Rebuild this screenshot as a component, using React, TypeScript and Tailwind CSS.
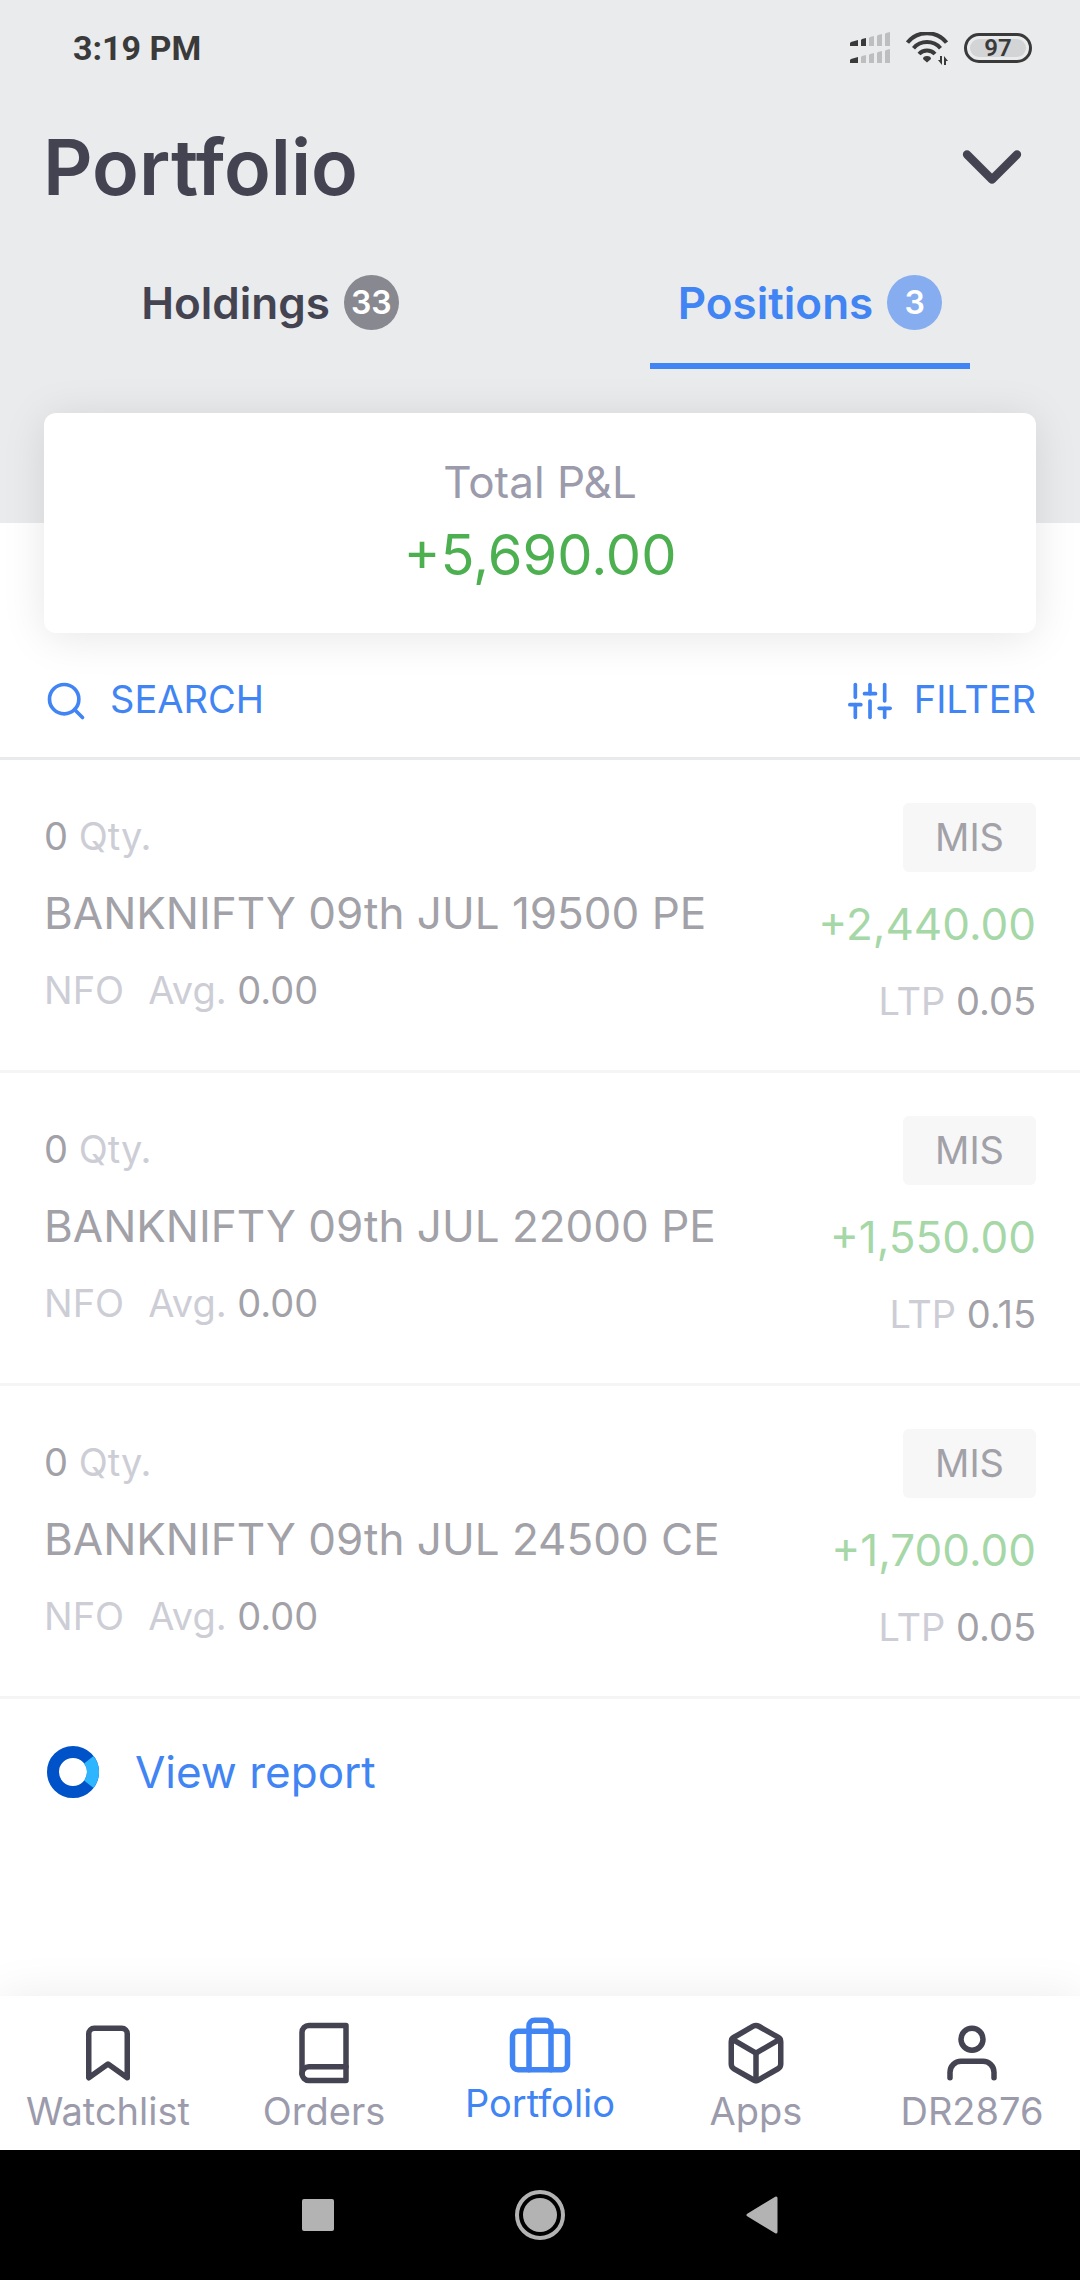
import React from 'react';
import clsx from 'clsx';
import { FiBookmark, FiBook, FiBox, FiBriefcase, FiChevronDown, FiSearch, FiSliders, FiUser } from 'react-icons/fi';
import type { IconType } from 'react-icons';

interface Position {
  qty: number;
  name: string;
  exchange: string;
  avg: string;
  product: string;
  pnl: string;
  ltp: string;
}

const POSITIONS: Position[] = [
  { qty: 0, name: 'BANKNIFTY 09th JUL 19500 PE', exchange: 'NFO', avg: '0.00', product: 'MIS', pnl: '+2,440.00', ltp: '0.05' },
  { qty: 0, name: 'BANKNIFTY 09th JUL 22000 PE', exchange: 'NFO', avg: '0.00', product: 'MIS', pnl: '+1,550.00', ltp: '0.15' },
  { qty: 0, name: 'BANKNIFTY 09th JUL 24500 CE', exchange: 'NFO', avg: '0.00', product: 'MIS', pnl: '+1,700.00', ltp: '0.05' },
];

const NAV_ITEMS: { label: string; icon: IconType; active?: boolean }[] = [
  { label: 'Watchlist', icon: FiBookmark },
  { label: 'Orders', icon: FiBook },
  { label: 'Portfolio', icon: FiBriefcase, active: true },
  { label: 'Apps', icon: FiBox },
  { label: 'DR2876', icon: FiUser },
];

const SignalIcon = () => (
  <svg width="40" height="32" viewBox="0 0 40 32" aria-hidden="true">
    <path fill="#3a3a3a" d="M0 11l1-1 7-2v6H0zM11 8l1-1 4-1v8h-5z" />
    <path fill="#bdbec0" d="M19 6l1-1 4-1v10h-5zM27 4l1-1 4-1v12h-5zM35 2l1-1 4-1v14h-5z" />
    <path fill="#3a3a3a" d="M0 28l1-1 7-2v6H0z" />
    <path fill="#bdbec0" d="M11 25l1-1 4-1v8h-5zM19 23l1-1 4-1v10h-5zM27 21l1-1 4-1v12h-5zM35 19l1-1 4-1v14h-5z" />
  </svg>
);

const WifiIcon = () => (
  <svg width="42" height="33" viewBox="0 0 42 33" fill="none" aria-hidden="true">
    <g stroke="#3a3a3a" strokeWidth="4">
      <path d="M1.5 10.6A25 25 0 0 1 40.5 10.6" />
      <path d="M7.5 16.2A18 18 0 0 1 34.5 16.2" />
      <path d="M13 22A11 11 0 0 1 29 22" />
    </g>
    <path fill="#3a3a3a" d="M17 27Q17 24 21 24T25 27L21 30.500Z" />
    <path fill="#3a3a3a" d="M34 24h2v9l-4-5h2zM38 33v-9l4 5h-2v4z" />
  </svg>
);

const ReportIcon = () => (
  <svg width="52" height="52" viewBox="0 0 52 52" fill="none" aria-hidden="true">
    <circle cx="26" cy="26" r="20" stroke="#0052c8" strokeWidth="12" />
    <path d="M41.8 13.7A20 20 0 0 1 41.8 38.3" stroke="#2eb5ff" strokeWidth="12" />
  </svg>
);

const StatusBar = () => (
  <div className="flex h-24 items-center justify-between pl-[73px] pr-12">
    <time className="font-[Roboto,sans-serif] text-[34px] font-bold leading-none text-[#3a3a3a]">3:19 PM</time>
    <div className="flex items-center gap-4">
      <SignalIcon />
      <WifiIcon />
      <div className="flex h-[30px] w-[68px] rounded-full border-[3px] border-[#3a3a3a] p-[3px]">
        <span className="flex flex-1 items-center justify-center rounded-full bg-[#d3d4d6] font-[Roboto,sans-serif] text-[24px] font-semibold leading-none text-[#3a3a3a]">
          97
        </span>
      </div>
    </div>
  </div>
);

const Tab = ({ label, count, active }: { label: string; count: number; active?: boolean }) => (
  <div className="flex flex-1 justify-center">
    <button
      type="button"
      role="tab"
      aria-selected={!!active}
      className={clsx(
        'flex h-[133px] items-center gap-3.5 border-b-[6px] px-7 pt-1.5 text-[44px] font-semibold',
        active ? 'border-[#4184f3] text-[#4184f3]' : 'border-transparent text-[#444351]'
      )}
    >
      {label}
      <span
        className={clsx(
          'flex size-[55px] items-center justify-center rounded-full text-[32px] leading-none text-white',
          active ? 'bg-[#86adf0]' : 'bg-[#888890]'
        )}
      >
        {count}
      </span>
    </button>
  </div>
);

const PositionRow = ({ position }: { position: Position }) => (
  <li className="flex justify-between border-b-[3px] border-[#f5f5f6] px-11 pb-[30px] pt-[38px] text-[38px] leading-[77px] text-[#a1a1a7]">
    <div>
      <p>
        {position.qty} <span className="text-[#cdcdd6]">Qty.</span>
      </p>
      <p className="text-[44px]">{position.name}</p>
      <p>
        <span className="mr-6 text-[#cdcdd6]">{position.exchange}</span>
        <span className="text-[#cdcdd6]">Avg.</span> {position.avg}
      </p>
    </div>
    <div className="flex flex-col items-end pt-[5px]">
      <span className="mb-3.5 rounded-md bg-[#f7f7f7] px-8 leading-[69px]">{position.product}</span>
      <p className="text-[44px] text-[#a6d7a7]">{position.pnl}</p>
      <p>
        <span className="text-[#cdcdd6]">LTP</span> {position.ltp}
      </p>
    </div>
  </li>
);

export default function App() {
  return (
    <div className="flex min-h-screen flex-col bg-white font-[Inter,sans-serif]">
      <header className="bg-[#eaebed] pb-[154px]">
        <StatusBar />
        <div className="flex h-[140px] items-center justify-between pl-[43px] pr-[38px] pt-0.5">
          <h1 className="text-[77px] font-semibold leading-none text-[#444351]">Portfolio</h1>
          <button type="button" aria-label="Expand" className="text-[#444351]">
            <FiChevronDown size={100} />
          </button>
        </div>
        <div role="tablist" className="flex">
          <Tab label="Holdings" count={33} />
          <Tab label="Positions" count={3} active />
        </div>
      </header>

      <main className="flex-1">
        <section className="relative mx-11 -mt-[110px] rounded-xl bg-white pb-[38px] pt-9 text-center shadow-[0_4px_44px_rgba(0,0,0,0.1)]">
          <h2 className="text-[44px] leading-[66px] text-[#9b9bac]">Total P&amp;L</h2>
          <p className="text-[56px] leading-[80px] text-[#4caf50]">+5,690.00</p>
        </section>

        <div className="flex h-[127px] items-center justify-between border-b-[3px] border-[#e9eaeb] px-11 pt-3 text-[38px] text-[#4184f3]">
          <button type="button" className="flex items-center gap-[22px]">
            <FiSearch size={44} />
            <span className="pb-1">SEARCH</span>
          </button>
          <button type="button" className="flex items-center gap-[22px]">
            <FiSliders size={44} />
            <span className="pb-1">FILTER</span>
          </button>
        </div>

        <ul>
          {POSITIONS.map((position) => (
            <PositionRow key={position.name} position={position} />
          ))}
        </ul>

        <a href="#report" className="flex items-center gap-9 px-[47px] py-10 text-[44px] leading-[66px] text-[#4184f3]">
          <ReportIcon />
          View report
        </a>
      </main>

      <nav className="grid h-[154px] grid-cols-5 bg-white shadow-[0_0_44px_rgba(0,0,0,0.08)]">
        {NAV_ITEMS.map(({ label, icon: Icon, active }) => (
          <a
            key={label}
            href={`#${label.toLowerCase()}`}
            className={clsx('flex flex-col items-center text-[38px] leading-[50px]', active ? 'pt-4 text-[#4184f3]' : 'pt-6 text-[#9b9bac]')}
          >
            <Icon size={66} className={active ? 'text-[#4184f3]' : 'text-[#444351]'} />
            {label}
          </a>
        ))}
      </nav>

      {/* Android system navigation */}
      <div className="relative flex h-[130px] items-center justify-center gap-[181px] bg-black">
        <button type="button" aria-label="Recents" className="size-8 rounded-xs bg-[#b3b3b3]" />
        <button type="button" aria-label="Home" className="flex size-[50px] items-center justify-center rounded-full border-4 border-[#b3b3b3]">
          <span className="size-[34px] rounded-full bg-[#b3b3b3]" />
        </button>
        <button type="button" aria-label="Back">
          <svg width="32" height="38" viewBox="0 0 32 38" aria-hidden="true">
            <path d="M2 19L30 2V36Z" fill="#b3b3b3" stroke="#b3b3b3" strokeWidth="3" strokeLinejoin="round" />
          </svg>
        </button>
      </div>
    </div>
  );
}
